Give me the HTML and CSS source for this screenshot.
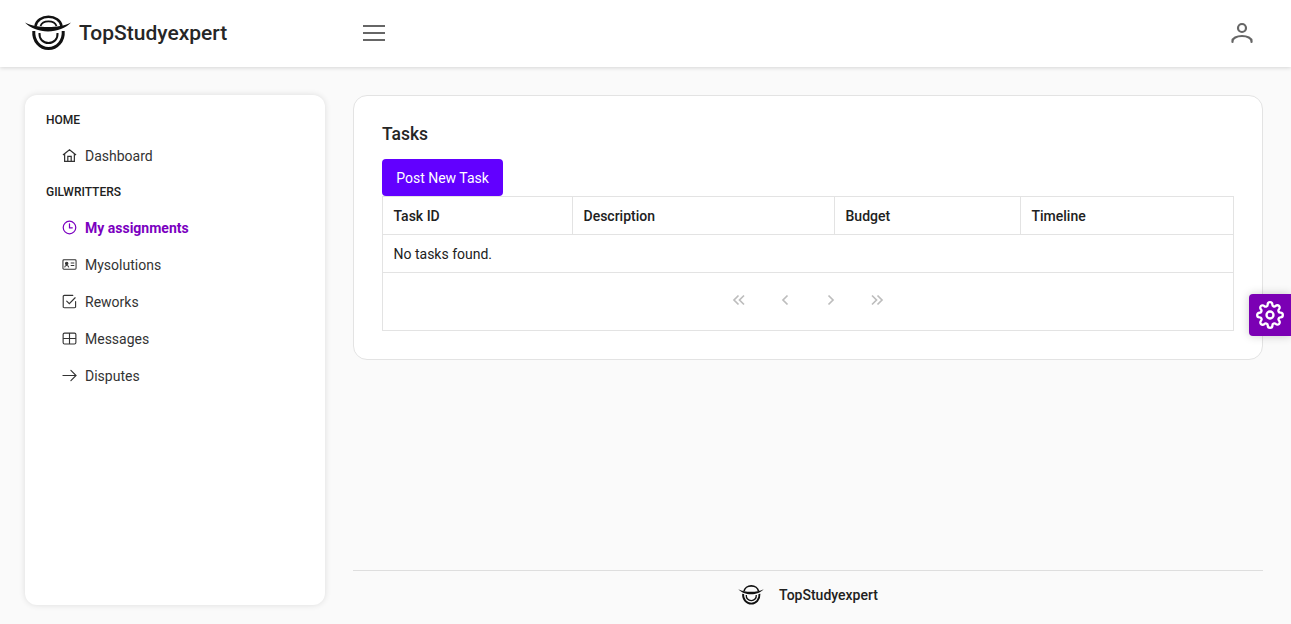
FILE: index.html
```html
<!DOCTYPE html>
<html lang="en">
<head>
  <meta charset="UTF-8" />
  <meta name="viewport" content="width=device-width, initial-scale=1.0"/>
  <title>TopStudyexpert</title>
  <link rel="stylesheet" href="styles.css">
</head>
<body>
  <header class="topbar">
    <div class="brand">
      <svg class="brand-logo" viewBox="0 0 46 36" fill="none" stroke="#111">
        <path d="M10.500 11C11.500 5.500 17 1.700 23.500 1.700S35.500 5.500 36.500 11" stroke-width="2.600"/>
        <path d="M15.500 11C16.500 8 19.500 6.300 23.500 6.300S30.500 8 31.500 11" stroke-width="1.800"/>
        <path d="M0 7.500C7 11 14.500 12 23 12S39 11 46 7.500C41 13 32 16.500 23 16.500S5 13 0 7.500Z" fill="#111" stroke="none"/>
        <path d="M8.800 16C8 26 15 33.500 23.500 33.500S39 26 38.200 16" stroke-width="3"/>
        <path d="M14.500 18C14 24 18 28 23.500 28S33 24 32.500 18" stroke-width="2"/>
      </svg>
      <span class="brand-name">TopStudyexpert</span>
    </div>
    <button class="menu-btn" type="button" aria-label="Menu">
      <span></span><span></span><span></span>
    </button>
    <svg class="user-icon" viewBox="0 0 24 24" fill="none" stroke="#666" stroke-width="2.200" stroke-linecap="round">
      <circle cx="12" cy="7" r="4"/>
      <path d="M2.500 21v-1c0-2.500 4-5 9.500-5s9.500 2.500 9.500 5v1"/>
    </svg>
  </header>

  <div class="layout">
    <aside class="sidebar">
      <div class="nav-title">HOME</div>
      <a class="nav-item">
        <svg viewBox="0 0 16 16" fill="none" stroke="currentColor" stroke-width="1.300"><path d="M1 7.500 8 1.800l7 5.700M2.800 6.500v7.700h10.400V6.500M6.200 14.200V9h3.600v5.200"/></svg>
        Dashboard
      </a>
      <div class="nav-title">GILWRITTERS</div>
      <a class="nav-item active">
        <svg viewBox="0 0 16 16" fill="none" stroke="currentColor" stroke-width="1.300" stroke-linecap="round"><circle cx="8" cy="8" r="6.700"/><path d="M8 4v4.300h3"/></svg>
        My assignments
      </a>
      <a class="nav-item">
        <svg viewBox="0 0 16 16" fill="none" stroke="currentColor" stroke-width="1.100"><rect x="1" y="3" width="14" height="10" rx="1"/><circle cx="5" cy="6.800" r="1.300" fill="currentColor"/><path d="M2.800 11c.3-1.500 1.100-2 2.200-2s1.900.5 2.200 2M9.300 6.500h3.800M9.300 9h3.800"/></svg>
        Mysolutions
      </a>
      <a class="nav-item">
        <svg viewBox="0 0 16 16" fill="none" stroke="currentColor" stroke-width="1.200" stroke-linecap="round"><path d="M14.500 8v5.500a1.200 1.200 0 0 1-1.200 1.200H2.500a1.200 1.200 0 0 1-1.200-1.200V2.700a1.200 1.200 0 0 1 1.200-1.200h9"/><path d="m5 7.500 2.800 2.800L14 4"/></svg>
        Reworks
      </a>
      <a class="nav-item">
        <svg viewBox="0 0 16 16" fill="none" stroke="currentColor" stroke-width="1.200"><rect x="1.200" y="2.200" width="13.600" height="11.600" rx="1.500"/><path d="M1.200 8h13.600M8 2.200v11.600"/></svg>
        Messages
      </a>
      <a class="nav-item">
        <svg viewBox="0 0 16 16" fill="none" stroke="currentColor" stroke-width="1.200" stroke-linecap="round"><path d="M1 8h14M9.500 2.500 15 8l-5.500 5.500"/></svg>
        Disputes
      </a>
    </aside>

    <div class="content">
      <main class="card">
        <h1 class="card-title">Tasks</h1>
        <button class="post-btn" type="button">Post New Task</button>
        <table class="tasks">
          <thead>
            <tr>
              <th class="col-id">Task ID</th>
              <th class="col-desc">Description</th>
              <th class="col-budget">Budget</th>
              <th>Timeline</th>
            </tr>
          </thead>
          <tbody>
            <tr><td colspan="4">No tasks found.</td></tr>
          </tbody>
        </table>
        <div class="pager">
          <svg viewBox="0 0 14 12"><path d="M6.500 1.500 2 6l4.500 4.500M12 1.500 7.500 6l4.500 4.500"/></svg>
          <svg viewBox="0 0 14 12"><path d="M9.500 1.500 5 6l4.500 4.500"/></svg>
          <svg viewBox="0 0 14 12"><path d="M4.500 1.500 9 6l-4.500 4.500"/></svg>
          <svg viewBox="0 0 14 12"><path d="M2 1.500 6.500 6 2 10.500M7.500 1.500 12 6l-4.500 4.500"/></svg>
        </div>
      </main>

      <footer class="foot">
        <svg class="foot-logo" viewBox="0 0 46 36" fill="none" stroke="#111">
          <path d="M10.500 11C11.500 5.500 17 1.700 23.500 1.700S35.500 5.500 36.500 11" stroke-width="3"/>
          <path d="M0 7.500C7 11 14.500 12 23 12S39 11 46 7.500C41 13 32 16.500 23 16.500S5 13 0 7.500Z" fill="#111" stroke="none"/>
          <path d="M8.800 16C8 26 15 33.500 23.500 33.500S39 26 38.200 16" stroke-width="3.400"/>
          <path d="M14.500 18C14 24 18 28 23.500 28S33 24 32.500 18" stroke-width="2.400"/>
        </svg>
        <span class="foot-name">TopStudyexpert</span>
      </footer>
    </div>
  </div>

  <button class="settings" type="button" aria-label="Settings">
    <svg viewBox="0 0 24 24" fill="none" stroke="#fff" stroke-width="2" stroke-linecap="round" stroke-linejoin="round">
      <circle cx="12" cy="12" r="3"/>
      <path d="M19.400 15a1.650 1.650 0 0 0 .33 1.820l.06.06a2 2 0 0 1 0 2.830 2 2 0 0 1-2.830 0l-.06-.06a1.650 1.650 0 0 0-1.820-.33 1.650 1.650 0 0 0-1 1.510V21a2 2 0 0 1-2 2 2 2 0 0 1-2-2v-.09A1.650 1.650 0 0 0 9 19.400a1.650 1.650 0 0 0-1.820.33l-.06.06a2 2 0 0 1-2.830 0 2 2 0 0 1 0-2.830l.06-.06a1.650 1.650 0 0 0 .33-1.820 1.650 1.650 0 0 0-1.510-1H3a2 2 0 0 1-2-2 2 2 0 0 1 2-2h.09A1.650 1.650 0 0 0 4.600 9a1.650 1.650 0 0 0-.33-1.820l-.06-.06a2 2 0 0 1 0-2.830 2 2 0 0 1 2.830 0l.06.06a1.650 1.650 0 0 0 1.820.33H9a1.650 1.650 0 0 0 1-1.510V3a2 2 0 0 1 2-2 2 2 0 0 1 2 2v.09a1.650 1.650 0 0 0 1 1.510 1.650 1.650 0 0 0 1.820-.33l.06-.06a2 2 0 0 1 2.830 0 2 2 0 0 1 0 2.830l-.06.06a1.650 1.650 0 0 0-.33 1.820V9a1.650 1.650 0 0 0 1.510 1H21a2 2 0 0 1 2 2 2 2 0 0 1-2 2h-.09a1.650 1.650 0 0 0-1.510 1z"/>
    </svg>
  </button>
</body>
</html>
```

FILE: styles.css
```css
* {
  box-sizing: border-box;
}

body {
  margin: 0;
  height: 624px;
  overflow: hidden;
  background: #fafafa;
  color: #212121;
  font-family: Roboto, "Liberation Sans", sans-serif;
  font-size: 14px;
}

.topbar {
  height: 67px;
  padding: 0 37px 2px 25px;
  display: flex;
  align-items: center;
  background: #fff;
  box-shadow: 0 1px 4px rgba(0, 0, 0, 0.15);
}

.brand {
  width: 338px;
  display: flex;
  align-items: center;
  gap: 8px;
}

.brand-logo {
  width: 46px;
  height: 36px;
}

.brand-name {
  font-size: 21px;
  font-weight: 500;
  color: #262626;
}

.menu-btn {
  width: 22px;
  height: 16px;
  padding: 0;
  border: 0;
  background: none;
  display: flex;
  flex-direction: column;
  justify-content: space-between;
}

.menu-btn span {
  display: block;
  height: 2px;
  background: #666;
}

.user-icon {
  width: 24px;
  height: 24px;
  margin-left: auto;
}

.layout {
  height: 557px;
  padding: 28px 28px 0 25px;
  display: flex;
  gap: 28px;
}

.sidebar {
  width: 300px;
  height: 510px;
  padding: 15px 21px;
  background: #fff;
  border-radius: 12px;
  box-shadow: 0 0 6px rgba(0, 0, 0, 0.12);
}

.nav-title {
  height: 21px;
  line-height: 21px;
  margin-bottom: 6px;
  font-size: 12px;
  font-weight: 500;
  color: #212121;
}

.nav-item + .nav-title {
  margin-top: 8px;
}

.nav-item {
  height: 37px;
  padding-left: 16px;
  display: flex;
  align-items: center;
  gap: 8px;
  color: #333;
}

.nav-item svg {
  width: 15px;
  height: 15px;
  flex: none;
}

.nav-item.active {
  color: #7b00c0;
  font-weight: 700;
}

.content {
  flex: 1;
  display: flex;
  flex-direction: column;
}

.card {
  height: 265px;
  padding: 27px 28px 0;
  background: #fff;
  border: 1px solid #e3e3e3;
  border-radius: 14px;
}

.card-title {
  margin: 0 0 14px;
  height: 22px;
  line-height: 22px;
  font-size: 17.5px;
  font-weight: 500;
  color: #262626;
}

.post-btn {
  display: block;
  width: 121px;
  height: 37px;
  padding: 0;
  border: 0;
  border-radius: 4px;
  background: #6200ff;
  color: #fff;
  font-family: inherit;
  font-size: 14px;
}

.tasks {
  width: 852px;
  border-collapse: collapse;
  table-layout: fixed;
}

.tasks th,
.tasks td {
  height: 38px;
  padding: 0 10.5px;
  border: 1px solid #e3e3e3;
  text-align: left;
  font-size: 14px;
}

.tasks th {
  font-weight: 500;
}

.col-id {
  width: 190px;
}

.col-desc {
  width: 262px;
}

.col-budget {
  width: 186px;
}

.pager {
  width: 852px;
  height: 58px;
  padding-bottom: 3px;
  display: flex;
  justify-content: center;
  align-items: center;
  gap: 32px;
  border: 1px solid #e3e3e3;
  border-top: 0;
}

.pager svg {
  width: 14px;
  height: 12px;
  fill: none;
  stroke: #bdbdbd;
  stroke-width: 1.700;
}

.foot {
  margin-top: auto;
  height: 54px;
  padding-bottom: 6px;
  display: flex;
  justify-content: center;
  align-items: center;
  gap: 15px;
  border-top: 1px solid #dedede;
}

.foot-logo {
  width: 26px;
  height: 20px;
}

.foot-name {
  font-size: 14px;
  font-weight: 500;
  color: #212121;
}

.settings {
  position: fixed;
  top: 294px;
  right: 0;
  width: 42px;
  height: 42px;
  padding: 0;
  border: 0;
  border-radius: 4px 0 0 4px;
  background: #7b00b4;
  box-shadow: 0 0 10px rgba(0, 0, 0, 0.2);
  display: flex;
  align-items: center;
  justify-content: center;
}

.settings svg {
  width: 28px;
  height: 28px;
}
```
